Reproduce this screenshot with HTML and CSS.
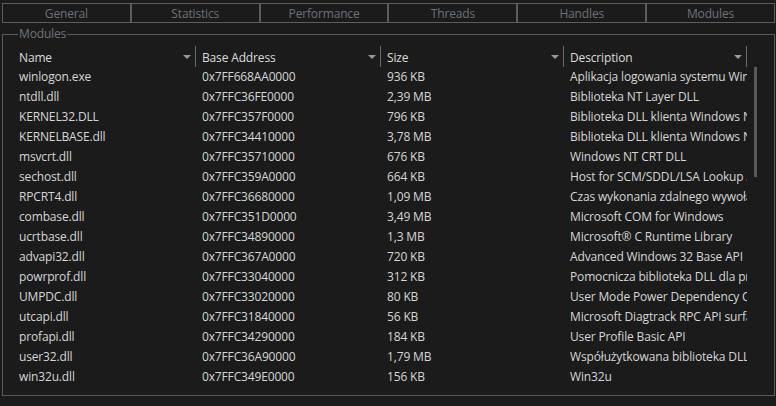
FILE: index.html
```html
<!DOCTYPE html>
<html>
<head>
<meta charset="utf-8">
<link rel="stylesheet" href="styles.css">
</head>
<body>
<div class="tabs">
  <div class="tab">General</div>
  <div class="tab">Statistics</div>
  <div class="tab">Performance</div>
  <div class="tab">Threads</div>
  <div class="tab">Handles</div>
  <div class="tab">Modules</div>
</div>
<fieldset class="group">
  <legend>Modules</legend>
  <div class="listwrap">
    <div class="list">
      <div class="row head">
        <div class="cell">Name<span class="arrow"></span></div>
        <div class="cell">Base Address<span class="arrow"></span></div>
        <div class="cell">Size<span class="arrow"></span></div>
        <div class="cell">Description<span class="arrow"></span></div>
      </div>
      <div class="row"><div class="cell">winlogon.exe</div><div class="cell">0x7FF668AA0000</div><div class="cell">936 KB</div><div class="cell">Aplikacja logowania systemu Windows</div></div>
      <div class="row"><div class="cell">ntdll.dll</div><div class="cell">0x7FFC36FE0000</div><div class="cell">2,39 MB</div><div class="cell">Biblioteka NT Layer DLL</div></div>
      <div class="row"><div class="cell">KERNEL32.DLL</div><div class="cell">0x7FFC357F0000</div><div class="cell">796 KB</div><div class="cell">Biblioteka DLL klienta Windows NT</div></div>
      <div class="row"><div class="cell">KERNELBASE.dll</div><div class="cell">0x7FFC34410000</div><div class="cell">3,78 MB</div><div class="cell">Biblioteka DLL klienta Windows NT</div></div>
      <div class="row"><div class="cell">msvcrt.dll</div><div class="cell">0x7FFC35710000</div><div class="cell">676 KB</div><div class="cell">Windows NT CRT DLL</div></div>
      <div class="row"><div class="cell">sechost.dll</div><div class="cell">0x7FFC359A0000</div><div class="cell">664 KB</div><div class="cell">Host for SCM/SDDL/LSA Lookup APIs</div></div>
      <div class="row"><div class="cell">RPCRT4.dll</div><div class="cell">0x7FFC36680000</div><div class="cell">1,09 MB</div><div class="cell">Czas wykonania zdalnego wywołania procedury</div></div>
      <div class="row"><div class="cell">combase.dll</div><div class="cell">0x7FFC351D0000</div><div class="cell">3,49 MB</div><div class="cell">Microsoft COM for Windows</div></div>
      <div class="row"><div class="cell">ucrtbase.dll</div><div class="cell">0x7FFC34890000</div><div class="cell">1,3 MB</div><div class="cell">Microsoft® C Runtime Library</div></div>
      <div class="row"><div class="cell">advapi32.dll</div><div class="cell">0x7FFC367A0000</div><div class="cell">720 KB</div><div class="cell">Advanced Windows 32 Base API</div></div>
      <div class="row"><div class="cell">powrprof.dll</div><div class="cell">0x7FFC33040000</div><div class="cell">312 KB</div><div class="cell">Pomocnicza biblioteka DLL dla profilu zasilania</div></div>
      <div class="row"><div class="cell">UMPDC.dll</div><div class="cell">0x7FFC33020000</div><div class="cell">80 KB</div><div class="cell">User Mode Power Dependency Coordinator</div></div>
      <div class="row"><div class="cell">utcapi.dll</div><div class="cell">0x7FFC31840000</div><div class="cell">56 KB</div><div class="cell">Microsoft Diagtrack RPC API surface</div></div>
      <div class="row"><div class="cell">profapi.dll</div><div class="cell">0x7FFC34290000</div><div class="cell">184 KB</div><div class="cell">User Profile Basic API</div></div>
      <div class="row"><div class="cell">user32.dll</div><div class="cell">0x7FFC36A90000</div><div class="cell">1,79 MB</div><div class="cell">Współużytkowana biblioteka DLL</div></div>
      <div class="row"><div class="cell">win32u.dll</div><div class="cell">0x7FFC349E0000</div><div class="cell">156 KB</div><div class="cell">Win32u</div></div>
    </div>
    <div class="scroll"><div class="thumb"></div></div>
  </div>
</fieldset>
</body>
</html>
```
FILE: styles.css
```css
html, body {
  margin: 0;
  padding: 0;
  background: #1b1b1b;
  height: 406px;
  overflow: hidden;
  font-family: "Open Sans", "Noto Sans", sans-serif;
  font-size: 12px;
  letter-spacing: -0.15px;
  color: #d6d6d6;
}
.tabs {
  display: flex;
  margin: 3px 1px 0 2px;
}
.tab {
  flex: 1;
  height: 18px;
  border: 1px solid #5c5c5c;
  color: #6a727c;
  font-size: 12px;
  line-height: 19px;
  text-align: center;
}
.group {
  margin: 4px 1px 0 2px;
  padding: 0 0 0 10px;
  border: 1px solid #5a5a5a;
  height: 369px;
  box-sizing: border-box;
}
.group legend {
  margin-left: 5px;
  padding: 0 1px;
  color: #6f747a;
  font-size: 12px;
  line-height: 14px;
}
.listwrap {
  display: flex;
  margin-top: 5px;
}
.list {
  width: 734px;
}
.row {
  display: grid;
  grid-template-columns: 183px 185px 183px 183px;
  height: 20px;
  line-height: 20px;
}
.row.head {
  height: 21px;
  line-height: 23px;
}
.cell {
  padding-left: 6px;
  white-space: nowrap;
  overflow: hidden;
  position: relative;
}
.head .cell {
  border-right: 1px solid #6a6a6a;
  color: #dcdcdc;
}
.arrow {
  position: absolute;
  right: 4px;
  top: 9px;
  width: 0;
  height: 0;
  border-left: 4px solid transparent;
  border-right: 4px solid transparent;
  border-top: 4px solid #9a9a9a;
}
.scroll {
  padding-left: 7px;
  padding-top: 21px;
}
.thumb {
  width: 3px;
  height: 110px;
  background: #5a5a5a;
}
```
